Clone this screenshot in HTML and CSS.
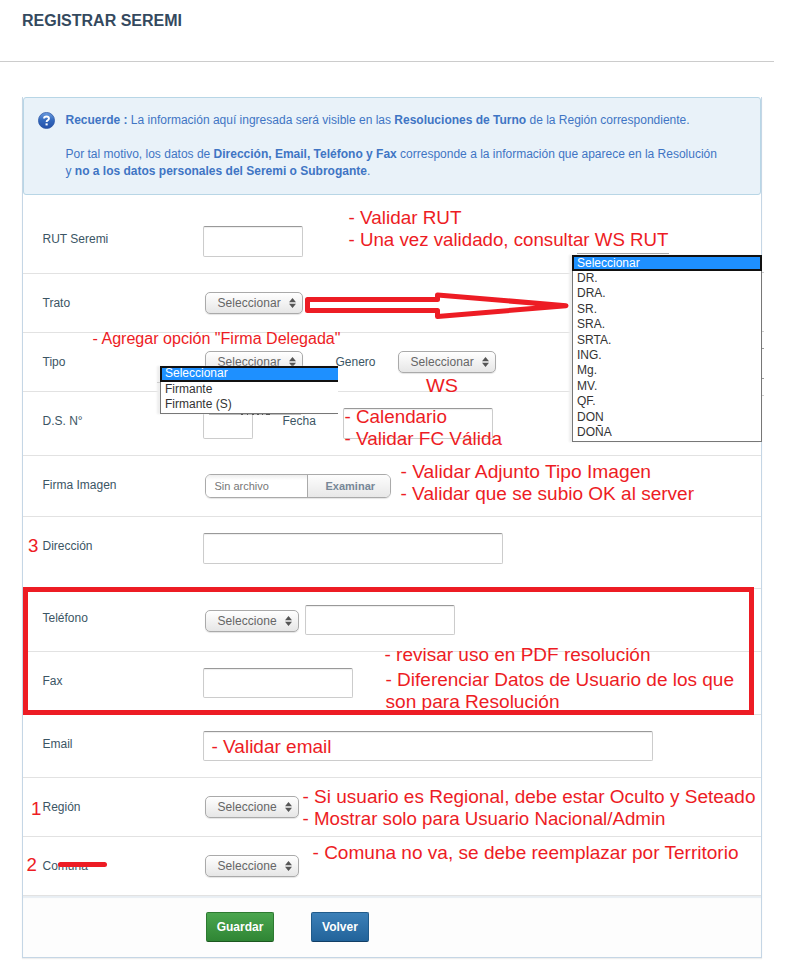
FILE: index.html
```html
<!DOCTYPE html>
<html lang="es">
<head>
<meta charset="utf-8">
<title>Registrar Seremi</title>
<link rel="stylesheet" href="styles.css">
</head>
<body>
<svg class="defs" aria-hidden="true">
  <symbol id="updown" viewBox="0 0 7 10"><path d="M0 4.2 3.5 0 7 4.2zM0 5.8h7L3.5 10z"/></symbol>
</svg>
<header class="page-head"><h1>REGISTRAR SEREMI</h1></header>
<main class="panel">
  <div class="alert">
    <svg class="help" viewBox="0 0 16 16">
      <defs><linearGradient id="ball" x2="0" y2="1"><stop stop-color="#6d9de0"/><stop offset=".5" stop-color="#3268bd"/><stop offset="1" stop-color="#2450a8"/></linearGradient></defs>
      <circle cx="8" cy="8" r="7.6" fill="url(#ball)" stroke="#2c56a4" stroke-width=".7"/>
      <path d="M5.7 6.1Q5.8 4.3 8 4.3T10.3 6.1Q10.3 7.2 9.1 7.8 8.1 8.3 8.1 9.4" fill="none" stroke="#fff" stroke-width="1.8"/>
      <path d="M7.1 10.7h2v1.9h-2z" fill="#fff"/>
    </svg>
    <div class="alert-text">
      <p class="a1"><strong>Recuerde :</strong> La información aquí ingresada será visible en las <strong>Resoluciones de Turno</strong> de la Región correspondiente.</p>
      <p class="a2">Por tal motivo, los datos de <strong>Dirección, Email, Teléfono y Fax</strong> corresponde a la información que aparece en la Resolución</p>
      <p class="a3">y <strong>no a los datos personales del Seremi o Subrogante</strong>.</p>
    </div>
  </div>
  <form>
    <div class="row first"><label>RUT Seremi</label><div class="field"><input class="w100"></div></div>
    <div class="row h59"><label>Trato</label><div class="field"><span class="select">Seleccionar<svg><use href="#updown"/></svg></span></div></div>
    <div class="row h59"><label>Tipo</label><div class="field"><span class="select">Seleccionar<svg><use href="#updown"/></svg></span><span class="inner genero">Genero</span><span class="select">Seleccionar<svg><use href="#updown"/></svg></span></div></div>
    <div class="row h64"><label>D.S. N°</label><div class="field"><input class="w50"><span class="inner fecha">Fecha</span><input class="w150"></div></div>
    <div class="row h61"><label>Firma Imagen</label><div class="field"><span class="file"><span>Sin archivo</span><b>Examinar</b></span></div></div>
    <div class="row h72"><label>Dirección</label><div class="field"><input class="w300"></div></div>
    <div class="row h63"><label>Teléfono</label><div class="field"><span class="select short low">Seleccione<svg><use href="#updown"/></svg></span><input class="w150 phone"></div></div>
    <div class="row h63"><label>Fax</label><div class="field"><input class="w150 s30"></div></div>
    <div class="row h63"><label>Email</label><div class="field"><input class="w450 s30"></div></div>
    <div class="row h59"><label>Región</label><div class="field"><span class="select short">Seleccione<svg><use href="#updown"/></svg></span></div></div>
    <div class="row h59"><label>Comuna</label><div class="field"><span class="select short">Seleccione<svg><use href="#updown"/></svg></span></div></div>
    <footer class="actions"><button type="button" class="green">Guardar</button><button type="button" class="blue">Volver</button></footer>
  </form>
</main>

<ul class="menu tipo"><li class="on">Seleccionar</li><li>Firmante</li><li>Firmante (S)</li></ul>
<ul class="menu trato"><li class="on">Seleccionar</li><li>DR.</li><li>DRA.</li><li>SR.</li><li>SRA.</li><li>SRTA.</li><li>ING.</li><li>Mg.</li><li>MV.</li><li>QF.</li><li>DON</li><li>DOÑA</li></ul>

<svg class="notes" width="795" height="974" viewBox="0 0 795 974">
  <g class="scraps">
    <path d="M577 253.5h92" stroke="#aaa"/>
    <path d="M762 272.5h2M762 331.5h2M762 395.5h2" stroke="#ccc"/>
    <path d="M762 348.5h2M762 378.5h2" stroke="#999"/>
    <path d="M209 414.5h92" stroke="#bbb"/>
    <path d="M241 414.5h2m4 0h1m4 0h2m3 0h2m3 0h1m3 0h4" stroke="#555"/>
    <path d="M157 382.5h3" stroke="#ccc"/>
  </g>
  <g class="ink">
    <rect x="25.5" y="589.5" width="726" height="123"/>
    <path d="M307.5 299.5h130v-4.5L566 305.7 437.5 316.5v-6h-130z"/>
    <path d="M60.500 864.500h44"/>
  </g>
  <g class="big">
    <text x="348.500" y="224" textLength="113" lengthAdjust="spacingAndGlyphs">- Validar RUT</text>
    <text x="348.500" y="246" textLength="320" lengthAdjust="spacingAndGlyphs">- Una vez validado, consultar WS RUT</text>
    <text class="mid" x="92.500" y="344" textLength="248" lengthAdjust="spacingAndGlyphs">- Agregar opción "Firma Delegada"</text>
    <text x="426" y="392" textLength="32" lengthAdjust="spacingAndGlyphs">WS</text>
    <text x="344.500" y="423" textLength="102.500" lengthAdjust="spacingAndGlyphs">- Calendario</text>
    <text x="344.500" y="445" textLength="157.500" lengthAdjust="spacingAndGlyphs">- Validar FC Válida</text>
    <text x="400.500" y="478" textLength="250.500" lengthAdjust="spacingAndGlyphs">- Validar Adjunto Tipo Imagen</text>
    <text x="400.500" y="500" textLength="293.500" lengthAdjust="spacingAndGlyphs">- Validar que se subio OK al server</text>
    <text x="28" y="552">3</text>
    <text x="384.500" y="661" textLength="266" lengthAdjust="spacingAndGlyphs">- revisar uso en PDF resolución</text>
    <text x="385.500" y="686" textLength="348.500" lengthAdjust="spacingAndGlyphs">- Diferenciar Datos de Usuario de los que</text>
    <text x="385.500" y="708" textLength="174" lengthAdjust="spacingAndGlyphs">son para Resolución</text>
    <text x="211.500" y="753" textLength="120" lengthAdjust="spacingAndGlyphs">- Validar email</text>
    <text x="31" y="815">1</text>
    <text x="302.500" y="803" textLength="453" lengthAdjust="spacingAndGlyphs">- Si usuario es Regional, debe estar Oculto y Seteado</text>
    <text x="302.500" y="825" textLength="363" lengthAdjust="spacingAndGlyphs">- Mostrar solo para Usuario Nacional/Admin</text>
    <text x="26.500" y="871">2</text>
    <text x="312.500" y="859" textLength="426" lengthAdjust="spacingAndGlyphs">- Comuna no va, se debe reemplazar por Territorio</text>
  </g>
</svg>
</body>
</html>
```
FILE: styles.css
```css
* { box-sizing: border-box; }
body { margin: 0; position: relative; width: 795px; height: 974px; overflow: hidden; background: #fff; color: #3b5564; font: 12px/18px "Liberation Sans", Arial, sans-serif; }
h1, p, ul { margin: 0; padding: 0; }
.defs { position: absolute; width: 0; height: 0; }
.page-head { width: 774px; height: 62px; padding: 11px 22px 0; border-bottom: 1px solid #ccc; }
h1 { font-size: 16px; line-height: 20px; color: #34495e; white-space: nowrap; }
.panel { width: 740px; height: 861px; margin: 35px 0 0 22px; border: solid #c5d6e5; border-width: 0 1px 1px; box-shadow: 0 1px 1px #eee; }
.alert { display: flex; gap: 11px; height: 98px; padding: 14px 14px 14px 13.5px; border: 1px solid #b8d6e6; border-radius: 3px; background: #e9f2f9; color: #3f75c4; }
.help { width: 17px; height: 17px; flex: none; }
.alert-text { line-height: 17px; white-space: nowrap; }
.a1 { margin-bottom: 17px; }
.row { display: flex; border-bottom: 1px solid #e2e2e2; }
.row label { width: 180px; padding: 20px 0 0 19.5px; white-space: nowrap; }
.first { height: 79px; padding-top: 15px; }
.h59 { height: 59px; } .h61 { height: 61px; } .h63 { height: 63px; } .h64 { height: 64px; } .h72 { height: 72px; }
.field { display: flex; align-items: flex-start; }
input { height: 31px; margin: 16px 0 0; padding: 0 8px; border: 1px solid #ccc; border-top-color: #999; border-radius: 2px; background: #fff; box-shadow: inset 0 1px 1px #eee; }
.s30, .phone { height: 30px; }
.phone { margin-left: 6px; }
.w50 { width: 50px; } .w100 { width: 100px; } .w150 { width: 150px; } .w300 { width: 300px; } .w450 { width: 450px; }
.select { display: flex; align-items: center; justify-content: space-between; width: 98px; height: 22px; margin: 18px 0 0 2px; padding: 0 6px 1px 11.5px; border: 1px solid #aaa; border-radius: 5px; background: linear-gradient(#fff, #e6e6e6); box-shadow: 0 1px 1px #e5e5e5; color: #666; letter-spacing: .05px; }
.select.short { width: 94px; }
.select.low { margin-top: 21px; }
.select svg { width: 7px; height: 10px; fill: #555; }
.inner { padding-top: 20px; white-space: nowrap; }
.genero { width: 93px; padding-left: 32.5px; }
.fecha { width: 90px; padding-left: 29.5px; }
.file { display: flex; width: 186px; height: 24px; margin: 18px 0 0 2px; border: 1px solid #aaa; border-radius: 6px; overflow: hidden; color: #777; font-size: 11px; line-height: 23px; box-shadow: 0 1px 1px #e5e5e5; }
.file span { width: 102px; padding-left: 8.5px; border-right: 1px solid #aaa; background: linear-gradient(#eee, #fff 5px); }
.file b { flex: 1; padding-left: 17.5px; background: linear-gradient(#fdfdfd, #e8e8e8); color: #778797; }
.actions { display: flex; gap: 37px; height: 61px; padding: 16px 0 0 183px; background: #fdfdfd; box-shadow: inset 0 2px 1px #e8eef3; }
button { height: 30px; padding: 0; border: 1px solid; border-radius: 2px; color: #fff; font: bold 12px "Liberation Sans", Arial, sans-serif; }
.green { width: 68px; border-color: #2d7a31 #2d7a31 #1c571f; background: linear-gradient(#4ba64f, #2f8534); }
.blue { width: 58px; border-color: #205b8b #205b8b #123f66; background: linear-gradient(#3c80b8, #22639a); }
.menu { position: absolute; list-style: none; border: 1px solid #777; background: #fff; color: #333; line-height: 15.4px; box-shadow: -3px 0 2px #eee; }
.menu li { height: 15.4px; padding-left: 4px; white-space: nowrap; }
.menu .on { margin: -1px -1px 0; padding-left: 3px; height: 16px; line-height: 12px; border: 2px solid #111; background: #1e90ff; color: #fff; }
.trato { left: 572px; top: 255px; width: 190px; height: 187px; }
.tipo { left: 160px; top: 366px; width: 178px; height: 48px; border-right: 0; }
.tipo .on { margin-right: 0; border-right: 0; line-height: 11px; }
.notes { position: absolute; left: 0; top: 0; }
.scraps, .ink { fill: none; }
.ink { stroke: #ed1c24; stroke-width: 5px; }
.ink path { stroke-linejoin: round; stroke-linecap: round; }
.big { fill: #ed1c24; font-size: 18.670px; }
.mid { font-size: 16px; }
```
